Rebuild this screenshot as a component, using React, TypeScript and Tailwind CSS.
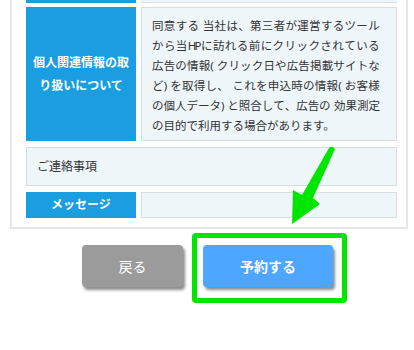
import React from "react";

const infoLines = [
  "同意する 当社は、第三者が運営するツール",
  "から当HPに訪れる前にクリックされている",
  "広告の情報(クリック日や広告掲載サイトな",
  "ど)を取得し、 これを申込時の情報(お客様",
  "の個人データ)と照合して、広告の 効果測定",
  "の目的で利用する場合があります。",
];

// justified line: every character gets a share of the 228px line, ascii narrower
const JustifiedLine: React.FC<{ text: string }> = ({ text }) => {
  const chars = Array.from(text);
  const cols = chars
    .map((c) => {
      const w = c === " " ? 0.3 : /[\x00-\x7f]/.test(c) ? 0.55 : 1;
      return `minmax(0,${w}fr)`;
    })
    .join(" ");
  return (
    <div className="grid w-[228px]" style={{ gridTemplateColumns: cols }}>
      {chars.map((ch, i) => (
        <span key={i} className="whitespace-pre">
          {ch}
        </span>
      ))}
    </div>
  );
};

const App: React.FC = () => {
  return (
    <div
      className="relative w-[414px] h-[350px] bg-white overflow-hidden text-[#333]"
      style={{ fontFamily: '"Noto Sans", "Noto Sans CJK JP", sans-serif' }}
    >
      {/* form panel */}
      <div className="ml-[10px] w-[398px] border-x-2 border-b-2 border-[#e6e6e6] pl-[14px] pr-[9px] pb-[9px]">
        {/* previous row, cut off at the top */}
        <div className="flex gap-[5px] h-[3px]">
          <div className="w-[110px] bg-[#1a9ee0]" />
          <div className="flex-1 bg-[#eef6fa] border-b border-[#d6dee3]" />
        </div>

        <div className="flex gap-[5px] mt-[4px] h-[134px]">
          <div className="w-[110px] bg-[#1a9ee0] flex items-center justify-center text-center text-white font-bold text-[12px] leading-[23px]">
            個人関連情報の取
            <br />
            り扱いについて
          </div>
          <div className="flex-1 bg-[#eef6fa] border border-[#d6dee3] pl-[10px] pt-[8px] text-[11.5px] leading-[20px]">
            {infoLines.slice(0, 5).map((line, i) => (
              <JustifiedLine key={i} text={line} />
            ))}
            <div>{infoLines[5]}</div>
          </div>
        </div>

        <div className="mt-[6px] h-[39px] bg-[#eef6fa] border border-[#d6dee3] flex items-center pl-[10px] text-[12px]">
          ご連絡事項
        </div>

        <div className="flex gap-[5px] mt-[6px] h-[26px]">
          <div className="w-[110px] bg-[#1a9ee0] flex items-center justify-center text-white font-bold text-[12px]">
            メッセージ
          </div>
          <div className="flex-1 bg-[#eef6fa] border border-[#d6dee3]" />
        </div>
      </div>

      {/* buttons */}
      <div className="flex justify-center gap-[20px] mt-[16px] pl-[1px]">
        <button className="w-[101px] h-[42px] rounded-[4px] bg-[#9b9b9b] text-white text-[14px] shadow-[2px_3px_3px_rgba(0,0,0,0.45)]">
          戻る
        </button>
        <div className="relative">
          <button className="w-[130px] h-[42px] rounded-[4px] bg-[#4da6ff] text-white font-bold text-[14px] shadow-[2px_3px_3px_rgba(0,0,0,0.45)]">
            予約する
          </button>
          <div className="absolute left-[-11px] top-[-12px] w-[155px] h-[70px] border-[5px] border-[#00e600] rounded-[4px]" />
        </div>
      </div>

      {/* annotation arrow */}
      <svg
        className="absolute left-0 top-0"
        width="414"
        height="350"
        viewBox="0 0 414 350"
      >
        <path
          d="M329 148 Q332 145 335 149 L313 198 L320 204 L292 224 L293 190 L302 195 Z"
          fill="#00e600"
        />
      </svg>
    </div>
  );
};

export default App;
